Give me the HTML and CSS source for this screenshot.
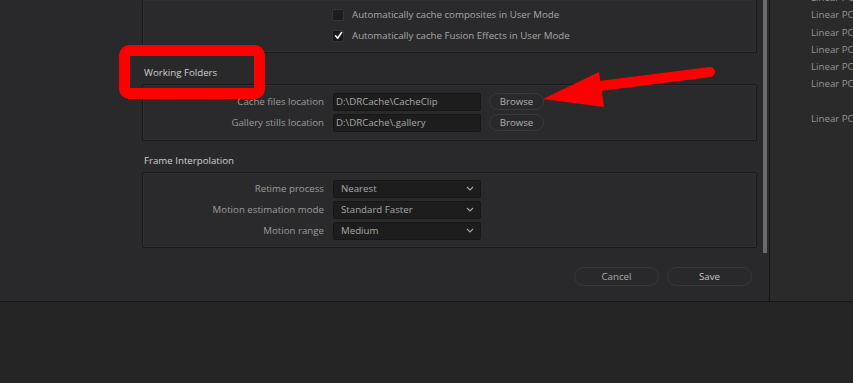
FILE: index.html
```html
<!DOCTYPE html>
<html lang="en">
<head>
    <meta charset="UTF-8">
    <title>Preferences - Working Folders</title>
    <link rel="stylesheet" href="styles.css">
</head>
<body>
    <div class="screen">
        <div class="dialog">
            <div class="gutter"></div>
            <div class="content">
                <!-- Top section, scrolled partly out of view -->
                <div class="box box-top">
                    <label class="check-row">
                        <span class="checkbox"></span>
                        Automatically cache composites in User Mode
                    </label>
                    <label class="check-row">
                        <span class="checkbox checked">
                            <svg width="9" height="9" viewBox="0 0 9 9"><path d="M1.5 4.8 L3.6 7.2 L7.6 1.5" fill="none" stroke="#f2f2f2" stroke-width="1.6" stroke-linecap="round" stroke-linejoin="round"/></svg>
                        </span>
                        Automatically cache Fusion Effects in User Mode
                    </label>
                </div>

                <h3 class="section-title">Working Folders</h3>
                <div class="box box-folders">
                    <div class="form-row">
                        <span class="label">Cache files location</span>
                        <span class="field">D:\DRCache\CacheClip</span>
                        <button type="button" class="browse">Browse</button>
                    </div>
                    <div class="form-row">
                        <span class="label">Gallery stills location</span>
                        <span class="field">D:\DRCache\.gallery</span>
                        <button type="button" class="browse">Browse</button>
                    </div>
                </div>

                <h3 class="section-title">Frame Interpolation</h3>
                <div class="box box-interp">
                    <div class="form-row">
                        <span class="label">Retime process</span>
                        <span class="field select">Nearest
                            <svg class="chev" width="8" height="5" viewBox="0 0 8 5"><path d="M1 1 L4 4 L7 1" fill="none" stroke="#a8a8a8" stroke-width="1.1"/></svg>
                        </span>
                    </div>
                    <div class="form-row">
                        <span class="label">Motion estimation mode</span>
                        <span class="field select">Standard Faster
                            <svg class="chev" width="8" height="5" viewBox="0 0 8 5"><path d="M1 1 L4 4 L7 1" fill="none" stroke="#a8a8a8" stroke-width="1.1"/></svg>
                        </span>
                    </div>
                    <div class="form-row">
                        <span class="label">Motion range</span>
                        <span class="field select">Medium
                            <svg class="chev" width="8" height="5" viewBox="0 0 8 5"><path d="M1 1 L4 4 L7 1" fill="none" stroke="#a8a8a8" stroke-width="1.1"/></svg>
                        </span>
                    </div>
                </div>

                <div class="actions">
                    <button type="button" class="pill">Cancel</button>
                    <button type="button" class="pill save">Save</button>
                </div>
            </div>
            <div class="scroll-track"><div class="scroll-thumb"></div></div>
        </div>

        <div class="side-panel">
            <div class="side-list">
                <div>Linear PC</div>
                <div>Linear PC</div>
                <div>Linear PC</div>
                <div>Linear PC</div>
                <div>Linear PC</div>
                <div>Linear PC</div>
                <div></div>
                <div>Linear PC</div>
            </div>
        </div>
    </div>

    <!-- Red annotation drawn over the screenshot -->
    <svg class="annotation" width="853" height="383" viewBox="0 0 853 383">
        <rect x="124.5" y="50.5" width="135" height="43" rx="5" fill="none" stroke="#ff0000" stroke-width="11"/>
        <line x1="710" y1="72" x2="592" y2="87" stroke="#ff0000" stroke-width="10" stroke-linecap="round"/>
        <polygon points="543,99 599,72 604,107" fill="#ff0000"/>
    </svg>
</body>
</html>
```

FILE: styles.css
```css
body {
    margin: 0;
    background: #252526;
    font-family: "Open Sans", "DejaVu Sans", sans-serif;
    font-size: 9.7px;
    color: #a3a3a3;
    width: 853px;
    height: 383px;
    overflow: hidden;
    position: relative;
}
.screen {
    display: flex;
    height: 301px;
    border-bottom: 1px solid #161617;
}
.dialog {
    display: flex;
    width: 769px;
    background: #29292b;
    border-right: 1px solid #161617;
}
.gutter {
    width: 142px;
}
.content {
    width: 615px;
    display: flex;
    flex-direction: column;
}
.box {
    border: 1px solid #19191a;
    border-radius: 2px;
    background: #2a2a2c;
    box-shadow: inset 0 0 0 1px #303032;
    display: flex;
    flex-direction: column;
    box-sizing: border-box;
}
.box-top {
    border-top: none;
    height: 53px;
    padding: 4px 0 0 189px;
}
.check-row {
    display: flex;
    align-items: center;
    height: 21px;
    gap: 8px;
    color: #a6a6a6;
}
.checkbox {
    width: 10px;
    height: 10px;
    background: #1d1d1e;
    border: 1px solid #353537;
    border-radius: 1px;
    display: flex;
    align-items: center;
    justify-content: center;
}
.checkbox.checked {
    background: #1a1a1b;
}
.section-title {
    margin: 0;
    height: 31px;
    box-sizing: border-box;
    padding: 13px 0 0 2px;
    font-size: 9.7px;
    font-weight: normal;
    color: #d0d0d0;
}
.box-folders {
    height: 57px;
    padding-top: 6px;
}
.box-interp {
    height: 76px;
    padding-top: 5px;
}
.form-row {
    display: flex;
    align-items: center;
    height: 21px;
}
.label {
    width: 181px;
    text-align: right;
    color: #9b9b9b;
    padding-right: 9px;
}
.field {
    width: 144px;
    height: 16px;
    line-height: 16px;
    background: #1d1d1e;
    border: 1px solid #171718;
    border-radius: 2px;
    padding: 0 0 0 2px;
    color: #a8a8a8;
    display: flex;
    align-items: center;
    justify-content: space-between;
    box-sizing: content-box;
}
.field.select {
    width: 139px;
    padding-left: 7px;
}
.chev {
    margin-right: 6px;
}
.browse {
    margin-left: 8px;
    width: 55px;
    height: 17px;
    padding: 0;
    font-family: inherit;
    font-size: 9.7px;
    color: #b0b0b0;
    background: #29292b;
    border: 1px solid #39393b;
    border-radius: 9px;
}
.actions {
    display: flex;
    justify-content: flex-end;
    gap: 8px;
    padding: 19px 5px 0 0;
}
.pill {
    width: 85px;
    height: 19px;
    padding: 0;
    font-family: inherit;
    font-size: 9.7px;
    color: #a9a9a9;
    background: #29292b;
    border: 1px solid #38383a;
    border-radius: 10px;
}
.pill.save {
    color: #c4c4c4;
}
.scroll-track {
    margin-left: 6px;
    width: 6px;
}
.scroll-thumb {
    width: 4px;
    height: 253px;
    background: #6b6b6d;
}
.side-panel {
    flex: 1;
    background: #2a2a2b;
    overflow: hidden;
}
.side-list {
    margin: -11px 0 0 41px;
    color: #959595;
    white-space: nowrap;
}
.side-list div {
    height: 17.3px;
    line-height: 17.3px;
}
.annotation {
    position: absolute;
    left: 0;
    top: 0;
}
```
